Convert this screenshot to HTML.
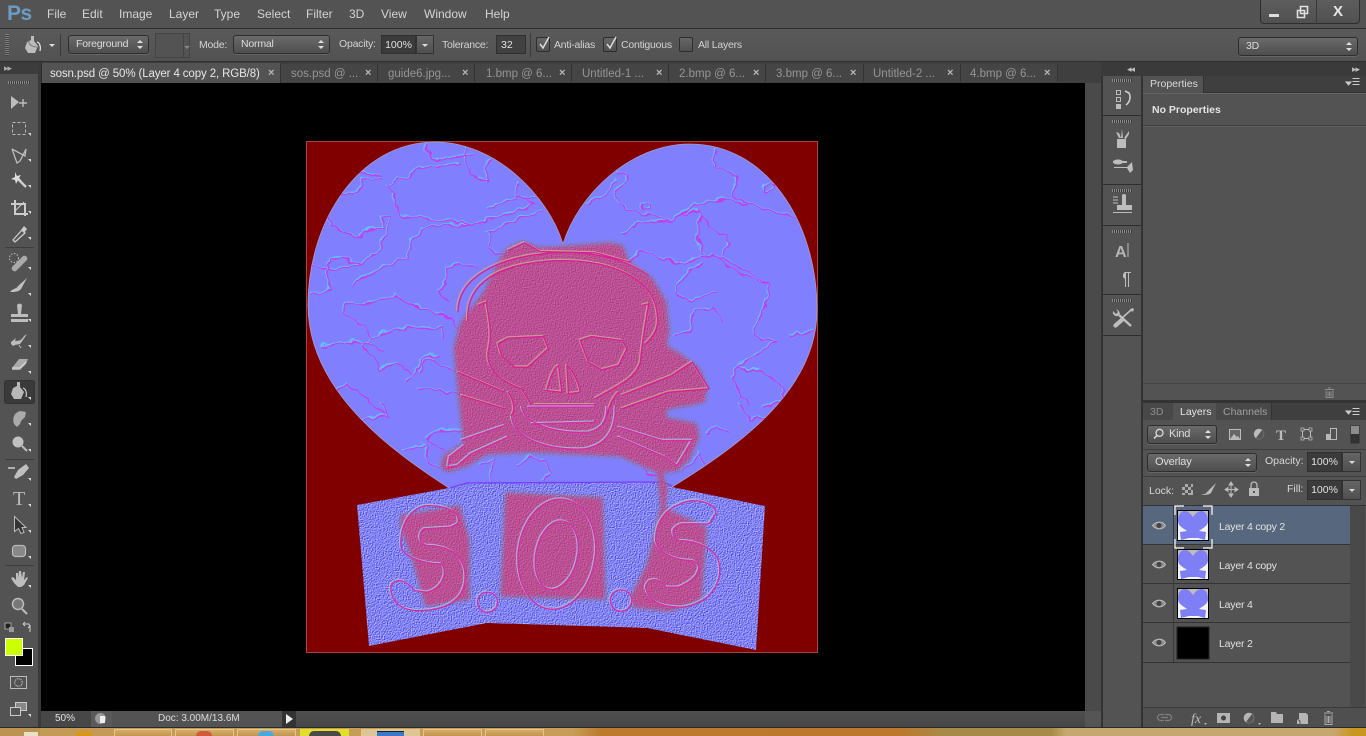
<!DOCTYPE html>
<html><head><meta charset="utf-8"><style>
html,body{margin:0;padding:0;width:1366px;height:736px;overflow:hidden;background:#535353}
body{position:relative;font-family:"Liberation Sans",sans-serif;font-size:11px;color:#d6d6d6}
.a{position:absolute}
.t{position:absolute;white-space:nowrap;line-height:14px}
.m{font-size:12px;top:7px;color:#d4d4d4}
.o{top:38px;color:#d2d2d2;font-size:10.5px;letter-spacing:-.22px}
.sel{position:absolute;box-sizing:border-box;border:1px solid #2e2e2e;border-radius:3px;background:linear-gradient(#6a6a6a,#4e4e4e);box-shadow:0 1px 0 #666;color:#dcdcdc;font-size:10.5px;letter-spacing:-.2px;line-height:17px;padding-left:7px}
.sel:after{content:"";position:absolute;right:5px;top:4px;width:0;height:0;border:3px solid transparent;border-bottom:3px solid #ddd;border-top:0}
.sel:before{content:"";position:absolute;right:5px;top:10px;width:0;height:0;border:3px solid transparent;border-top:3px solid #ddd;border-bottom:0}
.box{position:absolute;box-sizing:border-box;background:#3b3b3b;border:1px solid #303030;color:#e0e0e0;font-size:10.5px;text-align:center}
.arr{position:absolute;box-sizing:border-box;background:linear-gradient(#666,#4f4f4f);border:1px solid #333}
.arr:after{content:"";position:absolute;left:50%;top:50%;margin:-1px 0 0 -3px;border:3px solid transparent;border-top:3px solid #ddd;border-bottom:0}
.cb{position:absolute;box-sizing:border-box;width:14px;height:15px;top:37px;border:1px solid #2e2e2e;border-radius:2px;background:linear-gradient(#666,#505050)}
.tab{position:absolute;top:64px;height:18px;background:#454545;border-right:1px solid #333;box-sizing:border-box}
.tt{position:absolute;top:67px;font-size:11.5px;line-height:14px;color:#959595;white-space:nowrap}
.tx{position:absolute;top:66px;font-size:11px;line-height:14px;color:#b8b8b8;font-weight:bold}
.row{position:absolute;left:1143px;width:207px;height:39px;border-bottom:1px solid #333;box-sizing:border-box}
.ln{position:absolute;left:1219px;font-size:10.5px;color:#e2e2e2;white-space:nowrap;letter-spacing:-.2px}
svg{position:absolute;overflow:visible}
.g{position:absolute;height:3px;background:repeating-linear-gradient(90deg,#8a8a8a 0 1px,#3c3c3c 1px 2px)}
.tk{position:absolute;top:729px;height:7px;background:linear-gradient(#d6ac66,#c09550);border:1px solid #e2c68f;border-bottom:0;box-sizing:border-box}
</style></head><body>

<!-- top bars -->
<div class="a" style="left:0;top:0;width:1366px;height:28px;background:#535353"></div>
<div class="a" style="left:0;top:28px;width:1366px;height:1px;background:#2e2e2e"></div>
<div class="a" style="left:0;top:29px;width:1366px;height:32px;background:linear-gradient(#5a5a5a,#525252)"></div>
<div class="a" style="left:0;top:61px;width:1366px;height:1px;background:#2e2e2e"></div>
<div class="t" style="left:7px;top:2px;font-size:21px;line-height:24px;font-weight:bold;color:#6c9cc6;letter-spacing:-.5px">Ps</div>
<span class="t m" style="left:47px">File</span><span class="t m" style="left:82px">Edit</span><span class="t m" style="left:119px">Image</span><span class="t m" style="left:169px">Layer</span><span class="t m" style="left:214px">Type</span><span class="t m" style="left:257px">Select</span><span class="t m" style="left:306px">Filter</span><span class="t m" style="left:349px">3D</span><span class="t m" style="left:381px">View</span><span class="t m" style="left:424px">Window</span><span class="t m" style="left:485px">Help</span>

<!-- window buttons -->
<div class="a" style="left:1260px;top:-2px;width:100px;height:26px;box-sizing:border-box;border:1px solid #2e2e2e;border-radius:0 0 4px 4px;background:linear-gradient(#5e5e5e,#505050)"></div>
<div class="a" style="left:1316px;top:0;width:1px;height:24px;background:#3a3a3a"></div>
<div class="a" style="left:1269px;top:14px;width:10px;height:3px;background:#ddd"></div>
<svg style="left:1296px;top:5px" width="14" height="14"><path d="M4.5 1.5h7v7h-7zM1.5 5.500h7v7h-7z" fill="#535353" stroke="#e0e0e0" stroke-width="1.600"/></svg>
<div class="t" style="left:1333px;top:3px;font-size:15px;font-weight:bold;color:#e6e6e6;line-height:18px">X</div>

<!-- options bar -->
<div class="g" style="left:5px;top:34px;width:4px;height:22px;background:repeating-linear-gradient(#7d7d7d 0 1px,#454545 1px 2px)"></div>
<svg style="left:22px;top:35px" width="22" height="20"><path d="M9,1h3v5l4,5-3,7H6L3,13l2-6 4-2z" fill="#bcbcbc"/><path d="M7,6c-1,3 3,6 8,6" fill="none" stroke="#777"/><path d="M15,7c3,1 4,5 3,9" fill="none" stroke="#ddd" stroke-width="1.300"/></svg>
<div class="a" style="left:49px;top:44px;border:3px solid transparent;border-top:3px solid #ddd;border-bottom:0"></div>
<div class="a" style="left:60px;top:34px;width:1px;height:22px;background:#3a3a3a"></div>
<div class="sel" style="left:68px;top:35px;width:81px;height:19px">Foreground</div>
<div class="a" style="left:155px;top:33px;width:35px;height:25px;box-sizing:border-box;border:1px solid #444;background:#535353"></div>
<div class="a" style="left:183px;top:33px;width:1px;height:25px;background:#444"></div>
<div class="a" style="left:184px;top:46px;border:3px solid transparent;border-top:3px solid #888;border-bottom:0"></div>
<span class="t o" style="left:199px">Mode:</span>
<div class="sel" style="left:233px;top:35px;width:97px;height:19px">Normal</div>
<span class="t o" style="left:339px;top:37px">Opacity:</span>
<div class="box" style="left:381px;top:35px;width:35px;height:19px;line-height:18px">100%</div><div class="arr" style="left:416px;top:35px;width:18px;height:19px"></div>
<span class="t o" style="left:442px">Tolerance:</span>
<div class="box" style="left:496px;top:35px;width:30px;height:19px;line-height:18px;text-align:left;padding-left:4px;background:#414141">32</div>
<div class="a" style="left:530px;top:33px;width:1px;height:24px;background:#3a3a3a"></div>
<div class="cb" style="left:536px"></div><svg style="left:537px;top:35px" width="14" height="16"><path d="M3 9l3 4 6-11" fill="none" stroke="#dcdcdc" stroke-width="1.500"/></svg>
<span class="t o" style="left:554px">Anti-alias</span>
<div class="cb" style="left:603px"></div><svg style="left:604px;top:35px" width="14" height="16"><path d="M3 9l3 4 6-11" fill="none" stroke="#dcdcdc" stroke-width="1.500"/></svg>
<span class="t o" style="left:621px">Contiguous</span>
<div class="cb" style="left:679px"></div>
<span class="t o" style="left:698px">All Layers</span>
<div class="sel" style="left:1238px;top:37px;width:120px;height:19px">3D</div>

<!-- tab bar -->
<div class="a" style="left:0;top:62px;width:1101px;height:21px;background:#3f3f3f"></div>
<div class="a" style="left:40px;top:62px;width:2px;height:21px;background:#2e2e2e"></div>
<div class="tab" style="left:42px;width:239px;background:#535353;top:63px;height:20px"></div>
<div class="tab" style="left:281px;width:97px"></div><div class="tab" style="left:378px;width:97px"></div><div class="tab" style="left:475px;width:97px"></div><div class="tab" style="left:572px;width:97px"></div><div class="tab" style="left:669px;width:97px"></div><div class="tab" style="left:766px;width:98px"></div><div class="tab" style="left:864px;width:97px"></div><div class="tab" style="left:961px;width:97px"></div>
<span class="tt" style="left:50px;color:#e6e6e6;letter-spacing:-.12px">sosn.psd @ 50% (Layer 4 copy 2, RGB/8)</span><span class="tx" style="left:268px">×</span>
<span class="tt" style="left:291px">sos.psd @ ...</span><span class="tx" style="left:365px">×</span>
<span class="tt" style="left:388px">guide6.jpg...</span><span class="tx" style="left:462px">×</span>
<span class="tt" style="left:486px">1.bmp @ 6...</span><span class="tx" style="left:559px">×</span>
<span class="tt" style="left:582px">Untitled-1 ...</span><span class="tx" style="left:656px">×</span>
<span class="tt" style="left:679px">2.bmp @ 6...</span><span class="tx" style="left:753px">×</span>
<span class="tt" style="left:776px">3.bmp @ 6...</span><span class="tx" style="left:850px">×</span>
<span class="tt" style="left:873px">Untitled-2 ...</span><span class="tx" style="left:947px">×</span>
<span class="tt" style="left:970px">4.bmp @ 6...</span><span class="tx" style="left:1044px">×</span>

<!-- canvas area -->
<div class="a" style="left:41px;top:83px;width:1044px;height:628px;background:#000"></div>
<div class="a" style="left:1085px;top:83px;width:16px;height:644px;background:#4a4a4a"></div>
<svg style="left:0;top:0" width="1366" height="736" viewBox="0 0 1366 736">
<defs>
<filter id="tex" x="0" y="0" width="100%" height="100%" color-interpolation-filters="sRGB">
<feTurbulence type="fractalNoise" baseFrequency=".75" numOctaves="2" seed="4" result="n"/>
<feDiffuseLighting in="n" surfaceScale=".55" diffuseConstant="1" lighting-color="#fff" result="l"><feDistantLight azimuth="225" elevation="30"/></feDiffuseLighting>
<feBlend in="l" in2="SourceGraphic" mode="overlay" result="b"/>
<feComposite in="b" in2="SourceAlpha" operator="in"/>
</filter>
<filter id="ptex" x="-5%" y="-5%" width="110%" height="110%" color-interpolation-filters="sRGB">
<feGaussianBlur in="SourceGraphic" stdDeviation="2" result="s"/>
<feTurbulence type="fractalNoise" baseFrequency=".75" numOctaves="2" seed="9" result="n"/>
<feDiffuseLighting in="n" surfaceScale=".3" diffuseConstant="1" lighting-color="#fff" result="l"><feDistantLight azimuth="225" elevation="30"/></feDiffuseLighting>
<feBlend in="l" in2="s" mode="overlay" result="b"/>
<feComposite in="b" in2="s" operator="in"/>
</filter>
<filter id="wig" filterUnits="userSpaceOnUse" x="300" y="135" width="530" height="530">
<feTurbulence type="fractalNoise" baseFrequency=".09" numOctaves="2" seed="3" result="n"/>
<feDisplacementMap in="SourceGraphic" in2="n" scale="9" xChannelSelector="R" yChannelSelector="G"/>
</filter>
<clipPath id="hc"><path d="M563,244C548,195 495,142 435,142C360,142 308,220 308,305C308,390 390,450 449,488L672,487C740,445 817,390 817,310C817,220 765,144 690,144C630,144 578,195 563,244Z"/></clipPath>
<g id="cr" fill="none" stroke-linejoin="round" stroke-width="4" transform="translate(300,135) scale(.3349,.3333)">
<path d="M375,25C380,60 390,70 430,72L480,65 525,50M490,40C490,90 510,110 530,130L560,140 555,90 570,70"/>
<path d="M115,185L165,170 185,150 190,130 245,135M180,115L215,112 245,130"/>
<path d="M270,150L290,130 330,125 350,100 480,85"/>
<path d="M260,150L280,170 275,200 300,240 340,248 460,258 520,268 640,230 700,210 680,190 640,180 655,145"/>
<path d="M560,215L620,200 650,185 700,185M560,290L620,265 725,225"/>
<path d="M90,235L90,265 130,290 170,305 210,280 245,280 240,245 270,250 245,320 240,345 180,385 140,395 90,405 85,375 120,365 175,385"/>
<path d="M30,480L90,460 85,405 35,395M150,450L250,395 320,370 330,320 370,280 450,270 540,268"/>
<path d="M565,290L565,340 610,360M530,400L470,385 440,400 435,450 410,470 440,500"/>
<path d="M130,505L190,510 280,480 340,515 430,540 480,575M130,505L130,530 190,570 215,605 190,630 240,700 290,680 330,715"/>
<path d="M60,630L190,620 250,650M215,605L270,590 320,575 420,580 425,610M105,770L140,745 200,790 250,840"/>
<path d="M1240,38L1235,90 1300,120 1295,180 1330,200 1400,225 1490,250M945,110L980,120 945,170 945,205 1020,235 1110,255 1180,210 1270,190 1330,205"/>
<path d="M855,205L915,180 945,130M960,295L1010,265 1110,255 1130,240 1190,225 1190,300 1200,355 1280,375 1400,445 1390,510 1350,600 1420,620 1300,700 1290,730 1340,810"/>
<path d="M985,380L1015,345 1130,385 1230,360 1320,420 1400,445M1120,450L1170,400 1210,385M1120,450L1120,480 1160,495 1240,475"/>
<path d="M1110,605L1160,590 1180,520 1230,520 1260,560M1190,240L1285,320 1265,360M1300,700L1370,700 1440,750 1450,790 1380,820"/>
<path d="M1460,605L1535,585M1385,160a14,12 0 1,0 28,0a14,12 0 1,0 -28,0M1020,213a10,9 0 1,0 20,0a10,9 0 1,0 -20,0"/>
<path d="M355,720C360,680 390,650 420,690L470,710M345,760C380,760 430,765 480,780M320,745L375,665 420,660"/>
</g>
<g id="cr2" fill="none" stroke-linejoin="round" stroke-width="4" transform="translate(300,400) scale(.3349,.3333)">
<path d="M480,90L400,95 380,120 430,150M310,150L370,135 380,190 420,200M200,80L180,55 260,50 235,10"/>
<path d="M540,190L575,175 570,245M650,190L690,170 730,180 745,215 725,240M1010,190L1030,215 1080,235M1140,215L1190,160 1205,195M1215,100L1240,80 1285,95M1310,10L1340,60 1400,50 1440,15"/>
</g>
<g id="sk" fill="none" stroke-linejoin="round" stroke-width="3.800" transform="translate(300,135) scale(.3349,.3333)">
<path d="M500,560C490,450 580,380 780,375C950,375 1060,440 1065,540C1070,570 1060,600 1030,625"/>
<path d="M470,530C470,430 580,360 780,350C900,350 985,380 1040,420"/>
<path d="M620,345L670,322 715,348 880,352 985,380"/>
<path d="M590,625L620,608 725,603 740,640 680,695 640,695 600,660Z"/>
<path d="M835,615L870,603 960,615 975,640 950,690 900,703 860,680Z"/>
<path d="M735,765C745,730 755,700 770,690L780,770ZM795,690C810,700 830,740 835,770L800,775Z"/>
<path d="M530,510L555,500C560,550 575,590 560,650C555,690 580,730 660,760L690,810"/>
<path d="M1020,510L1040,505C1030,560 1020,620 1015,680C1000,730 950,750 880,790"/>
<path d="M470,710L610,770M480,780L610,820M960,780L1110,720 1170,680 1220,760M960,820L1100,770 1220,760"/>
<path d="M700,808L880,808M620,770C640,800 640,830 630,840M950,770C930,790 920,820 915,840"/>
</g>
<g id="sk2" fill="none" stroke-linejoin="round" stroke-width="3.800" transform="translate(300,400) scale(.3349,.3333)">
<path d="M630,50C640,120 750,150 850,145C930,130 940,70 940,20M660,20C670,70 760,100 860,95C910,85 915,50 915,20"/>
<path d="M680,20L880,20M690,70L880,65"/>
<path d="M610,75L480,120M620,110L510,160 470,195 440,200 445,170 490,135"/>
<path d="M950,80L1080,120 1170,120 1125,195 1090,170 950,110"/>
<path d="M470,370C480,330 430,315 380,315C320,320 295,390 300,440C310,470 370,490 420,490C440,510 430,560 380,575L340,570C320,545 290,525 270,555C265,600 300,630 350,630C450,630 500,590 490,510C480,460 440,435 380,435C350,430 350,400 370,385L450,380Z"/>
<ellipse cx="765" cy="461" rx="115" ry="166" transform="rotate(8 765 461)"/>
<ellipse cx="765" cy="464" rx="62" ry="104" transform="rotate(12 765 464)"/>
<path d="M1240,340C1240,310 1200,300 1170,300C1100,310 1060,360 1060,420C1070,460 1120,480 1170,480C1200,490 1200,530 1130,560L1090,560C1070,530 1040,530 1030,560C1040,610 1090,620 1140,620C1220,610 1260,550 1250,490C1240,440 1180,420 1130,420C1100,400 1110,380 1140,370L1220,370Z"/>
<circle cx="558" cy="605" r="30"/><circle cx="957" cy="600" r="32"/>
</g>
</defs>
<rect x="306.500" y="141.500" width="511" height="511" fill="#800000" stroke="#a8433f"/>
<path d="M563,244C548,195 495,142 435,142C360,142 308,220 308,305C308,390 390,450 449,488L672,487C740,445 817,390 817,310C817,220 765,144 690,144C630,144 578,195 563,244Z" fill="#8080ff" stroke="#a69bc4" stroke-width=".8"/>
<g clip-path="url(#hc)"><g filter="url(#wig)"><use href="#cr" stroke="#58d4ff" transform="translate(-.6,-.6)" opacity=".75"/><use href="#cr" stroke="#c23cf0" transform="translate(.5,.5)"/><use href="#cr2" stroke="#58d4ff" transform="translate(-.6,-.6)" opacity=".75"/><use href="#cr2" stroke="#c23cf0" transform="translate(.5,.5)"/></g></g>
<polygon points="357,505 449,488 467,483 663,482 672,487 765,506 756,650 647,628 487,623 369,646" fill="#8484f4" filter="url(#tex)"/>
<path d="M450,488L467,483 663,482 672,486" fill="none" stroke="#7a3cff" stroke-width="1.300"/>
<g filter="url(#ptex)" fill="#bb5094">
<path d="M507,248L523,241 540,247 573,245 610,242 623,245 630,262 653,278 667,302 670,332 667,345 683,355 700,368 708,388 705,403 667,410 667,417 697,423 700,437 690,460 677,472 663,473 668,488 666,508 707,527 702,600 670,612 633,608 630,597 647,563 660,507 657,473 620,457 533,453 487,455 467,467 447,473 440,467 443,455 463,443 460,417 453,348 460,322 483,292 500,258Z"/>
<path d="M505,492L603,497 606,600 500,597Z"/>
<path d="M400,515L460,505 470,540 470,600 425,607 413,563 400,527Z"/>
</g>
<use href="#sk" stroke="#c8a294" transform="translate(-.7,-.7)" opacity=".9"/><use href="#sk" stroke="#dc1c96" transform="translate(.6,.6)"/>
<use href="#sk2" stroke="#a6bcd4" transform="translate(-.7,-.7)" opacity=".9"/><use href="#sk2" stroke="#d92aa6" transform="translate(.6,.6)"/>
</svg>

<!-- left toolbar -->
<div class="a" style="left:0;top:62px;width:38px;height:665px;background:#535353"></div>
<div class="a" style="left:38px;top:62px;width:3px;height:665px;background:#3a3a3a"></div>
<div class="a" style="left:0;top:62px;width:38px;height:12px;background:#3c3c3c"></div>
<div class="t" style="left:4px;top:61px;font-size:9px;color:#aaa;letter-spacing:-1px">▸▸</div>
<div class="g" style="left:8px;top:81px;width:22px"></div>
<div class="a" style="left:4px;top:380px;width:31px;height:24px;background:#3a3a3a;border-radius:3px;box-shadow:inset 0 0 0 1px #333"></div>
<div class="a" style="left:5px;top:247px;width:29px;height:1px;background:#3d3d3d"></div>
<div class="a" style="left:5px;top:459px;width:29px;height:1px;background:#3d3d3d"></div>
<div class="a" style="left:5px;top:565px;width:29px;height:1px;background:#3d3d3d"></div>
<svg style="left:0;top:0" width="40" height="727" viewBox="0 0 40 727" fill="#bdbdbd" stroke="none">
<g fill="#ddd"><path d="M31,136v-3h-3zM31,162v-3h-3zM31,188v-3h-3zM31,214v-3h-3zM31,240v-3h-3zM31,270v-3h-3zM31,296v-3h-3zM31,322v-3h-3zM31,348v-3h-3zM31,374v-3h-3zM31,400v-3h-3zM31,426v-3h-3zM31,452v-3h-3zM31,481v-3h-3zM31,507v-3h-3zM31,533v-3h-3zM31,559v-3h-3zM31,588v-3h-3zM31,717v-3h-3z"/></g>
<path d="M11,96l8,6-8,7z"/><path d="M23,99v8M19,103h8" stroke="#bdbdbd" stroke-width="1.400"/>
<rect x="12.500" y="122.500" width="13" height="12" fill="none" stroke="#bbb" stroke-dasharray="3 2"/>
<path d="M12,149L25,156 26,149 20,161 17,163 12,149" fill="none" stroke="#bbb" stroke-width="1.300"/>
<path d="M17,178l9,9" stroke="#ccc" stroke-width="2.500"/><path d="M15,172l2,4 4-1-2,3 3,3-4-1-2,4-1-4-4-1 4-2z" fill="#ddd"/>
<path d="M15,200v14h13M11,204h14v12" fill="none" stroke="#ccc" stroke-width="2"/><path d="M15,211l9-9" stroke="#ccc"/>
<path d="M13,240l9-10 3,3-10,9z" fill="none" stroke="#ccc" stroke-width="1.300"/><path d="M21,230l3-4 3,3-3,4z" fill="#ccc"/>
<path d="M12,267l11-11a3,3 0 0,1 4,4l-11,11a3,3 0 0,1-4-4z" fill="#aaa"/><circle cx="14" cy="258" r="4.500" fill="none" stroke="#bbb" stroke-dasharray="1.500 1.500"/>
<path d="M10,292c3-4 7-3 8-6l9-8-6,11c-2,3-7,3-11,3z" fill="#c0c0c0"/>
<path d="M11,319h17v3H11zM11,314h17v3H11zM17,305a3,3 0 0,1 5,0l-1,9h-3z"/>
<path d="M11,342l5-4-1,3c6,0 7-2 9-5l3-2-4,6-3,4 -5,1 -2,1 -2-2z" fill="#bbb"/><path d="M19,345l2,3" stroke="#bbb"/>
<path d="M12,368l7-9h9l-2,5-6,6h-8z" fill="#aaa"/><path d="M12,368h8l6-6" fill="none" stroke="#ddd"/>
<path d="M17,382h3v5l4,5-3,7h-7l-3-5 2-6 4-2z" fill="#b8b8b8"/><path d="M23,388c3,1 4,5 3,9" fill="none" stroke="#ddd"/>
<path d="M14,424c-2-6 0-11 6-13l6,1-1,5-4,4-1,3-3,3z" fill="#aaa"/>
<circle cx="18" cy="442" r="5.500" fill="#c0c0c0"/><path d="M22,446l5,5" stroke="#bbb" stroke-width="2"/>
<path d="M14,477l4-7 8-6 3,4-6,7-7,4z" fill="#c0c0c0"/><path d="M8,468h7" stroke="#ccc" stroke-width="1.500"/>
<text x="13" y="505" font-family="Liberation Serif,serif" font-size="20" fill="#bbb">T</text>
<path d="M14.500,516.500v15l4-3 2.500,5 3-1-2-5h4z" fill="#333" stroke="#bbb"/>
<rect x="12.500" y="545.500" width="13" height="11" rx="3" fill="#888" stroke="#bbb" stroke-width="1.200"/>
<path d="M14,583l-3-5 2-1 3,3v-7h2v5l1-7h2l1,7 1-6h2l-1 8 3-3 1 1-4 7-3,2h-3z"/>
<circle cx="18" cy="604" r="5.500" fill="#777" stroke="#bbb" stroke-width="1.500"/><path d="M22,609l5,5" stroke="#bbb" stroke-width="2"/>
<rect x="5" y="623" width="6" height="6" fill="#222" stroke="#ccc" stroke-width=".7"/><rect x="9" y="627" width="5" height="5" fill="#999"/>
<path d="M23,624h6l1,4M30,632v-6l-2,2M23,624l2-2M23,624l2,2" fill="none" stroke="#ccc"/>
<rect x="15.500" y="648.500" width="17" height="17" fill="#000" stroke="#fff"/>
<rect x="5.500" y="638.500" width="17" height="17" fill="#ccff00" stroke="#fff"/>
<rect x="10.500" y="676.500" width="16" height="12" fill="none" stroke="#bbb"/><circle cx="18.500" cy="682.500" r="3.800" fill="none" stroke="#ddd" stroke-dasharray="1 1"/>
<rect x="15.500" y="702.500" width="11" height="8" fill="#888" stroke="#ccc"/><rect x="10.500" y="707.500" width="10" height="8" fill="#555" stroke="#ccc"/>
</svg>

<!-- status bar -->
<div class="a" style="left:41px;top:711px;width:1060px;height:16px;background:linear-gradient(#4f4f4f,#464646)"></div>
<div class="a" style="left:41px;top:711px;width:50px;height:16px;background:#474747"></div>
<span class="t" style="left:55px;top:712px;font-size:10px;color:#e0e0e0">50%</span>
<div class="a" style="left:91px;top:711px;width:21px;height:16px;background:#5a5a5a"></div>
<div class="a" style="left:95px;top:713px;width:11px;height:11px;border-radius:50%;background:#999"></div>
<div class="a" style="left:100px;top:716px;width:5px;height:7px;background:#eee"></div>
<div class="a" style="left:112px;top:711px;width:170px;height:16px;background:#535353"></div>
<span class="t" style="left:158px;top:712px;font-size:10px;color:#dcdcdc">Doc: 3.00M/13.6M</span>
<div class="a" style="left:282px;top:711px;width:14px;height:16px;background:#333"></div>
<div class="a" style="left:286px;top:714px;border:5px solid transparent;border-left:7px solid #eee;border-right:0"></div>
<div class="a" style="left:1085px;top:711px;width:16px;height:16px;background:#555"></div>

<!-- right dock -->
<div class="a" style="left:1101px;top:62px;width:265px;height:14px;background:#3a3a3a"></div>
<div class="a" style="left:1101px;top:76px;width:2px;height:651px;background:#333"></div>
<div class="a" style="left:1141px;top:76px;width:2px;height:651px;background:#333"></div>
<div class="a" style="left:1103px;top:76px;width:38px;height:651px;background:#535353"></div>
<div class="t" style="left:1127px;top:62px;font-size:9px;color:#bbb;letter-spacing:-1px">◂◂</div>
<div class="t" style="left:1352px;top:62px;font-size:9px;color:#bbb;letter-spacing:-1px">▸▸</div>
<div class="a" style="left:1103px;top:115px;width:38px;height:1px;background:#2e2e2e"></div><div class="a" style="left:1103px;top:184px;width:38px;height:1px;background:#2e2e2e"></div><div class="a" style="left:1103px;top:225px;width:38px;height:1px;background:#2e2e2e"></div><div class="a" style="left:1103px;top:294px;width:38px;height:1px;background:#2e2e2e"></div><div class="a" style="left:1103px;top:335px;width:38px;height:1px;background:#2e2e2e"></div>
<div class="g" style="left:1112px;top:79px;width:20px"></div><div class="g" style="left:1112px;top:120px;width:20px"></div><div class="g" style="left:1112px;top:189px;width:20px"></div><div class="g" style="left:1112px;top:230px;width:20px"></div><div class="g" style="left:1112px;top:299px;width:20px"></div>
<svg style="left:1100px;top:60px" width="42" height="290" viewBox="0 0 42 290" fill="#bdbdbd">
<path d="M16.500,30.500h4v4h-4zM16.500,37.500h4v4h-4z" fill="none" stroke="#bbb"/><path d="M16,44h5v5h-5z"/><path d="M25,31l4,2c2,4 1,9-3,12" fill="none" stroke="#ccc" stroke-width="1.600"/>
<path d="M17,88h9v-9h-9zM19,78l-3-6 3,1 2,5zM24,78l5-7 0,3-3,5zM21,78l1-9 1,9z"/>
<path d="M13,101h14a4,4 0 0,0 0 2h-14zM14,107h13l5-5 1,8-3,3-3-5h-13z"/><ellipse cx="18" cy="102" rx="5" ry="2.500"/>
<path d="M17,145h15v5H17zM22,135a2.500,2.500 0 0,1 4,0v10h-4z"/><path d="M13,152.500h19M13,137h5M13,140h5M13,143h5" stroke="#bbb"/>
<text x="15" y="197" font-family="Liberation Sans,sans-serif" font-size="16" font-weight="bold" fill="#b5b5b5">A</text><path d="M28,183v14" stroke="#bbb"/>
<path d="M22,212h9v1h-2v14h-1v-14h-2v14h-1v-8a4,4 0 0,1 0-7z"/>
<path d="M19,255l12,11" stroke="#bdbdbd" stroke-width="2.400" fill="none"/><path d="M13,251a4,4 0 0,0 5,5l2-2-1-3-3-2 2,3-2,2-3-3z"/>
<path d="M31,250l-9,8" stroke="#bdbdbd" stroke-width="1.600" fill="none"/><path d="M22,257l-8,7a2,2 0 0,0 3,3l8-7z"/><path d="M30,249l3-1 1,2-2,2z"/>
</svg>

<!-- properties panel -->
<div class="a" style="left:1143px;top:76px;width:223px;height:17px;background:#3f3f3f"></div>
<div class="a" style="left:1143px;top:76px;width:61px;height:17px;background:#535353;border-right:1px solid #333;box-sizing:border-box"></div>
<div class="a" style="left:1143px;top:93px;width:223px;height:1px;background:#666"></div>
<div class="a" style="left:1143px;top:94px;width:223px;height:306px;background:#535353"></div>
<div class="a" style="left:1204px;top:92px;width:162px;height:1px;background:#333"></div>
<span class="t" style="left:1150px;top:77px;font-size:10.500px;color:#d8d8d8">Properties</span>
<span class="t" style="left:1152px;top:103px;font-size:10.500px;font-weight:bold;color:#e4e4e4">No Properties</span>
<div class="a" style="left:1143px;top:125px;width:223px;height:1px;background:#3e3e3e"></div>
<div class="a" style="left:1143px;top:126px;width:223px;height:1px;background:#606060"></div>
<div class="a" style="left:1143px;top:383px;width:223px;height:1px;background:#444"></div>
<svg style="left:1000px;top:60px" width="366" height="30"><path d="M346,22h5l-2.500,3zM352.500,18.500h7M352.500,21.500h7M352.500,24.500h7" stroke="#ccc" fill="#ccc" stroke-width="1"/></svg>
<svg style="left:1324px;top:387px" width="12" height="12"><path d="M1,2.500h9M4,1h3M2,3.500v7h7v-7M4,4.500v5M5.500,4.500v5M7,4.500v5" fill="none" stroke="#8a8a8a"/></svg>
<div class="a" style="left:1143px;top:400px;width:223px;height:3px;background:#333"></div>

<!-- layers panel -->
<div class="a" style="left:1143px;top:403px;width:223px;height:17px;background:#3f3f3f"></div>
<div class="a" style="left:1143px;top:403px;width:30px;height:17px;background:#484848"></div>
<div class="a" style="left:1173px;top:403px;width:43px;height:18px;background:#535353"></div>
<div class="a" style="left:1216px;top:403px;width:56px;height:17px;background:#484848;border-right:1px solid #333;box-sizing:border-box"></div>
<div class="a" style="left:1143px;top:421px;width:223px;height:306px;background:#535353"></div>
<span class="t" style="left:1150px;top:405px;font-size:10.500px;color:#8c8c8c">3D</span>
<span class="t" style="left:1180px;top:405px;font-size:10.500px;color:#e6e6e6">Layers</span>
<span class="t" style="left:1223px;top:405px;font-size:10.500px;color:#a0a0a0">Channels</span>
<svg style="left:1340px;top:405px" width="26" height="14"><path d="M6,6h5l-2.500,3zM12.500,3.500h7M12.500,6.500h7M12.500,9.500h7" stroke="#ccc" fill="#ccc"/></svg>
<div class="sel" style="left:1147px;top:425px;width:70px;height:19px;padding-left:21px;font-size:11px">Kind</div>
<svg style="left:1153px;top:428px" width="12" height="12"><circle cx="6.500" cy="4.800" r="3.500" fill="none" stroke="#ddd" stroke-width="1.300"/><path d="M4,7.500l-3,3" stroke="#ddd" stroke-width="1.500"/></svg>
<svg style="left:1225px;top:424px" width="140" height="22" fill="#b8b8b8">
<rect x="4.500" y="5.500" width="11" height="10" fill="#666" stroke="#bbb"/><path d="M5,15l4-5 3,3 1-1 2,3z"/>
<circle cx="34" cy="10" r="5.200" fill="#bbb"/><path d="M31,14l6-8a5,5 0 0,1-6,8z" fill="#555"/>
<text x="51" y="16" font-family="Liberation Serif,serif" font-size="15" font-weight="bold" fill="#bbb">T</text>
<path d="M77.500,5.500h8v9h-8z" fill="none" stroke="#bbb"/><path d="M76,4h3v3h-3zM84,4h3v3h-3zM76,13h3v3h-3zM84,13h3v3h-3z" fill="#555" stroke="#bbb" stroke-width=".7"/>
<path d="M105.500,4.500h6v11h-6z" fill="none" stroke="#bbb"/><path d="M101,10h5v6h-5z"/>
<rect x="126" y="2" width="8" height="17" fill="#333" stroke="#2e2e2e"/><rect x="126" y="2" width="8" height="8" fill="#8c8c8c"/>
</svg>
<div class="a" style="left:1143px;top:449px;width:223px;height:1px;background:#3e3e3e"></div>
<div class="sel" style="left:1147px;top:453px;width:110px;height:19px;font-size:11px">Overlay</div>
<span class="t" style="left:1265px;top:454px;font-size:10.500px;color:#d8d8d8">Opacity:</span>
<div class="box" style="left:1307px;top:452px;width:35px;height:20px;line-height:19px">100%</div><div class="arr" style="left:1342px;top:452px;width:19px;height:20px"></div>
<div class="a" style="left:1143px;top:476px;width:223px;height:1px;background:#3e3e3e"></div>
<span class="t" style="left:1149px;top:484px;font-size:10.500px;color:#d8d8d8">Lock:</span>
<svg style="left:1180px;top:480px" width="85" height="20">
<rect x="2" y="4" width="11" height="11" fill="#aaa"/><path d="M2,4h3v3H2zM8,4h3v3H8zM5,7h3v3H5zM11,7h2v3h-2zM2,10h3v3H2zM8,10h3v3H8zM5,13h3v2H5z" fill="#555"/>
<path d="M21,15c3-1 5-1 6-3l9-9-5,10c-2,2-6,2-10,2z" fill="#bbb"/>
<path d="M51,2v15M45,9.500h13M51,2l-2,3h4zM51,17l-2-3h4zM45,9.500l3-2v4zM58,9.500l-3-2v4z" stroke="#bbb" fill="#bbb"/>
<rect x="69" y="8" width="10" height="8" fill="#bbb"/><path d="M71,8V5a3,3 0 0,1 6,0v3" fill="none" stroke="#bbb" stroke-width="1.300"/><rect x="73" y="11" width="2" height="2" fill="#555"/>
</svg>
<span class="t" style="left:1287px;top:482px;font-size:10.500px;color:#d8d8d8">Fill:</span>
<div class="box" style="left:1307px;top:480px;width:35px;height:20px;line-height:19px">100%</div><div class="arr" style="left:1342px;top:480px;width:19px;height:20px"></div>
<div class="a" style="left:1143px;top:505px;width:223px;height:1px;background:#333"></div>

<div class="a" style="left:1350px;top:506px;width:15px;height:201px;background:#494949"></div>
<div class="row" style="top:506px;background:#56677e;height:39px"></div>
<div class="row" style="top:545px"></div>
<div class="row" style="top:584px"></div>
<div class="row" style="top:623px;height:40px"></div>
<div class="a" style="left:1173px;top:506px;width:1px;height:157px;background:#3a3a3a"></div>
<span class="ln" style="top:521px">Layer 4 copy 2</span>
<span class="ln" style="top:560px">Layer 4 copy</span>
<span class="ln" style="top:599px">Layer 4</span>
<span class="ln" style="top:638px">Layer 2</span>
<svg style="left:1143px;top:500px" width="70" height="170">
<defs>
<g id="eye"><path d="M9.500,25.500c4-4.500 10-4.500 13,0c-3,4.500-9,4.500-13,0z" fill="#8c8c8c" stroke="#bdbdbd"/><circle cx="16" cy="25.500" r="2.500" fill="#444"/></g>
<g id="th"><rect x="34.500" y="10.500" width="31" height="30" fill="#f4f4f4" stroke="#000"/><path d="M35,11h30v9H35z" fill="#bdbdbd"/><path d="M50,17C47,13 45,11 42,11C37,11 35,16 35,21C35,26 40,28 44,31L37,32 38,40 46,38 55,38 62,40 63,32 56,31C60,28 65,26 65,21C65,16 63,11 58,11C55,11 53,13 50,17Z" fill="#7f7ff5"/><rect x="34.500" y="10.500" width="31" height="30" fill="none" stroke="#000"/></g>
</defs>
<use href="#eye"/><use href="#eye" y="39"/><use href="#eye" y="78"/><use href="#eye" y="117"/>
<use href="#th"/><use href="#th" y="39"/><use href="#th" y="78"/>
<rect x="34" y="127" width="32" height="32" fill="#000" stroke="#222"/>
<path d="M32,15v-9h9M60,6h9v9M69,39v9h-9M41,48h-9v-9" fill="none" stroke="#fff" stroke-width="1.200"/>
</svg>
<div class="a" style="left:1143px;top:707px;width:223px;height:1px;background:#3a3a3a"></div>
<div class="a" style="left:1143px;top:708px;width:223px;height:19px;background:#4f4f4f"></div>
<svg style="left:1155px;top:708px" width="190" height="19" fill="#b5b5b5">
<path d="M9,6.500H5.500a3,3 0 0,0 0,6H9M10,6.500h3.500a3,3 0 0,1 0,6H10M6,9.500h7" fill="none" stroke="#808080" stroke-width="1.200"/>
<text x="36" y="15" font-family="Liberation Serif,serif" font-size="14" font-style="italic" fill="#bbb">fx</text>
<path d="M49,15h3l-1.500,2z"/>
<rect x="62" y="5" width="13" height="10"/><circle cx="68.500" cy="10" r="2.500" fill="#444"/>
<circle cx="94" cy="10" r="5.300"/><path d="M91,14l6-8a5,5 0 0,1-6,8z" fill="#555"/><path d="M103,15h3l-1.500,2z"/>
<path d="M116,4h5l1,2h6v9h-12z"/>
<path d="M144,5h7l2,2v9h-11v-5h2z"/><path d="M142,11l3,2v3" fill="none" stroke="#555"/>
<path d="M169,5h9M172,3.500h3M170,6.500v10h7v-10M172,8v7M173.500,8v7M175,8v7" fill="none" stroke="#aaa"/>
</svg>

<!-- taskbar -->
<div class="a" style="left:0;top:727px;width:1366px;height:1px;background:#2a2a2a"></div>
<div class="a" style="left:0;top:728px;width:1366px;height:8px;background:linear-gradient(90deg,#c39a55 0,#c79d58 42%,#bb7a2c 44%,#bc792d 66%,#a88a48 69%,#a88a48 77%,#c6a770 78%,#c6a770 100%)"></div>
<div class="a" style="left:1320px;top:728px;width:46px;height:8px;background:linear-gradient(100deg,#c6a770 0,#c6a770 30%,#c9971f 70%)"></div>
<div class="a" style="left:0;top:728px;width:40px;height:8px;background:#bc9350"></div>
<div class="a" style="left:24px;top:732px;width:14px;height:4px;background:#e8e0c8"></div>
<div class="a" style="left:75px;top:731px;width:18px;height:5px;border-radius:9px 9px 0 0;background:#d7961e"></div>
<div class="tk" style="left:114px;width:58px"></div>
<div class="tk" style="left:175px;width:59px"></div>
<div class="a" style="left:196px;top:731px;width:16px;height:5px;border-radius:8px 8px 0 0;background:#d25a3c"></div>
<div class="tk" style="left:237px;width:59px"></div>
<div class="a" style="left:258px;top:731px;width:16px;height:5px;border-radius:8px 8px 0 0;background:#4aa8dc"></div>
<div class="a" style="left:300px;top:729px;width:49px;height:7px;background:#dfe02c"></div>
<div class="a" style="left:309px;top:731px;width:32px;height:5px;border-radius:5px 5px 0 0;background:#4a4a4a"></div>
<div class="tk" style="left:361px;width:59px;background:#dcc596"></div>
<div class="a" style="left:377px;top:731px;width:27px;height:5px;background:#3c78c8;border-top:1px solid #123"></div>
<div class="tk" style="left:423px;width:59px"></div>
<div class="tk" style="left:485px;width:59px"></div>
</body></html>
